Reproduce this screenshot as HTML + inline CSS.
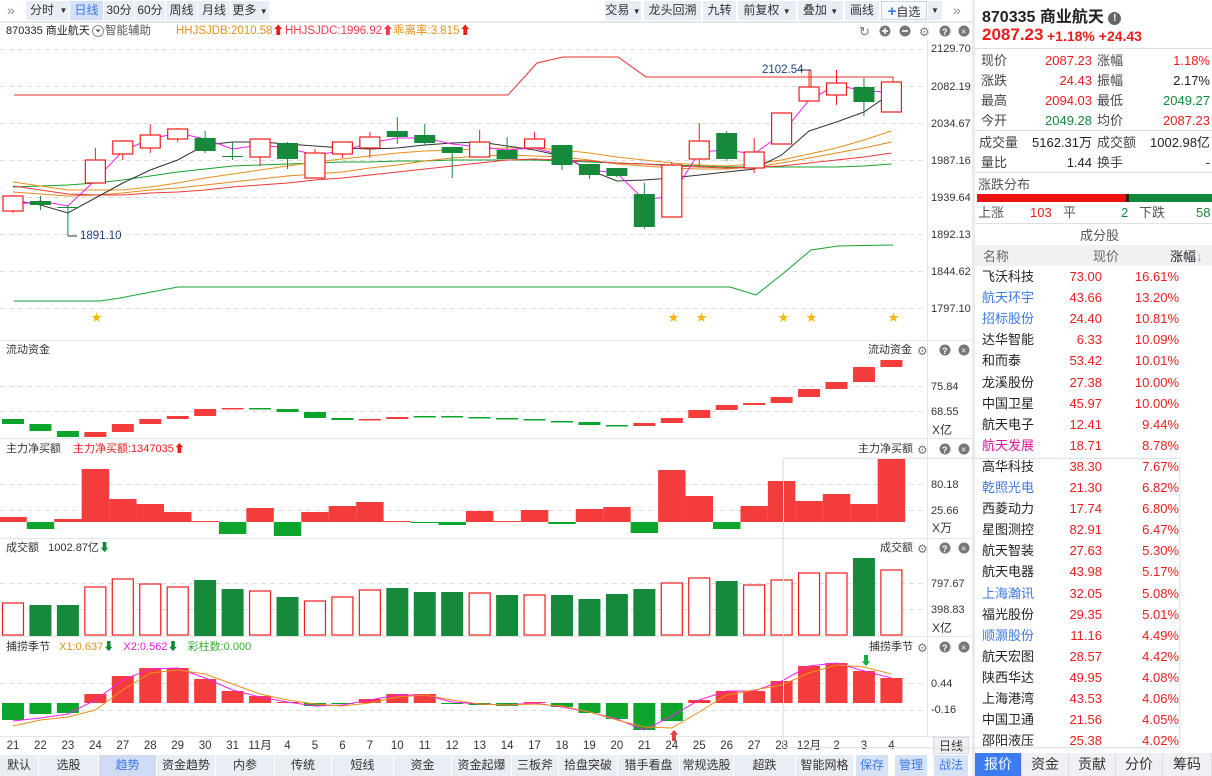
<!DOCTYPE html>
<html><head><meta charset="utf-8">
<style>
*{margin:0;padding:0;box-sizing:border-box}
body{width:1212px;height:776px;overflow:hidden;background:#fff;font-family:"Liberation Sans","Noto Sans CJK SC",sans-serif;font-size:12px;color:#333;position:relative}
.a{position:absolute;white-space:nowrap}
.btn{position:absolute;top:1px;height:19px;background:#e9edf5;line-height:19px;text-align:center;font-size:12px;color:#333}
.lbl{position:absolute;font-size:11px;color:#333;white-space:nowrap;line-height:14px}
.r{color:#ee1c1c}.g{color:#12883a}.b{color:#3c78e6}.o{color:#e8901c}.m{color:#e0149a}
.tab{position:absolute;top:755px;height:21px;line-height:21px;text-align:center;font-size:12px;background:#e9edf4;border-right:1px solid #fff}
.rt{position:absolute;top:753px;height:23px;line-height:23px;text-align:center;font-size:14px;background:#eef0f4;border-right:1px solid #d8dce4}
.row{position:absolute;left:975px;width:237px;height:21px;font-size:13px;line-height:21px}
.row span{position:absolute}
.q{position:absolute;font-size:13px;line-height:17px}
</style></head><body>

<div class="a" style="left:0;top:0;width:975px;height:22px;background:#fff;border-bottom:1px solid #e4e7ee"></div>
<div class="a" style="left:7px;top:2px;font-size:14px;color:#888">»</div>
<div class="btn" style="left:26px;width:32px">分时</div>
<div class="btn" style="left:58px;width:11px;font-size:8px">▼</div>
<div class="btn" style="left:70px;width:33px;background:#d3e0f5;color:#3c78e6">日线</div>
<div class="btn" style="left:104px;width:30px">30分</div>
<div class="btn" style="left:135px;width:30px">60分</div>
<div class="btn" style="left:166px;width:31px">周线</div>
<div class="btn" style="left:198px;width:32px">月线</div>
<div class="btn" style="left:231px;width:38px">更多 <span style="font-size:8px">▼</span></div>
<div class="btn" style="left:605px;width:36px">交易 <span style="font-size:8px">▼</span></div>
<div class="btn" style="left:644px;width:57px">龙头回溯</div>
<div class="btn" style="left:703px;width:33px">九转</div>
<div class="btn" style="left:738px;width:58px">前复权 <span style="font-size:8px">▼</span></div>
<div class="btn" style="left:798px;width:45px">叠加 <span style="font-size:8px">▼</span></div>
<div class="btn" style="left:845px;width:34px">画线</div>
<div class="btn" style="left:881px;width:46px;background:#f4f7fc;border:1px solid #c8d6ee"><span style="color:#3c78e6;font-size:15px;font-weight:bold">+</span>自选</div>
<div class="btn" style="left:928px;width:14px;font-size:8px">▼</div>
<div class="a" style="left:953px;top:2px;font-size:14px;color:#888">»</div>

<div class="lbl" style="left:6px;top:24px;font-size:11px;color:#222">870335 商业航天</div>
<div class="lbl" style="left:105px;top:24px;font-size:11.5px;color:#555">智能辅助</div>
<div class="lbl" style="left:176px;top:24px;font-size:11.5px;color:#e8901c">HHJSJDB:2010.58<span style="color:#ee1c1c">⬆</span></div>
<div class="lbl" style="left:285px;top:24px;font-size:11.5px;color:#f03c4a">HHJSJDC:1996.92⬆</div>
<div class="lbl" style="left:393px;top:24px;font-size:11.5px;color:#e8901c">乖离率:3.815<span style="color:#ee1c1c">⬆</span></div>

<svg id="ch" class="a" style="left:0;top:0" width="975" height="776"></svg>

<div class="lbl" style="left:931px;top:42px">2129.70</div>
<div class="lbl" style="left:931px;top:80px">2082.19</div>
<div class="lbl" style="left:931px;top:117px">2034.67</div>
<div class="lbl" style="left:931px;top:154px">1987.16</div>
<div class="lbl" style="left:931px;top:191px">1939.64</div>
<div class="lbl" style="left:931px;top:228px">1892.13</div>
<div class="lbl" style="left:931px;top:265px">1844.62</div>
<div class="lbl" style="left:931px;top:302px">1797.10</div>
<div class="lbl" style="left:80px;top:229px;color:#1f3f7a;font-size:11.5px">1891.10</div>
<div class="lbl" style="left:762px;top:63px;color:#1f3f7a;font-size:11.5px">2102.54</div>

<div class="lbl" style="left:6px;top:343px">流动资金</div>
<div class="lbl" style="left:868px;top:343px">流动资金</div>
<div class="lbl" style="left:931px;top:380px">75.84</div>
<div class="lbl" style="left:931px;top:405px">68.55</div>
<div class="lbl" style="left:932px;top:423px;font-size:12px">X亿</div>

<div class="lbl" style="left:6px;top:442px">主力净买额</div>
<div class="lbl" style="left:73px;top:442px;color:#ee1c1c">主力净买额:1347035⬆</div>
<div class="lbl" style="left:858px;top:442px">主力净买额</div>
<div class="lbl" style="left:931px;top:478px">80.18</div>
<div class="lbl" style="left:931px;top:504px">25.66</div>
<div class="lbl" style="left:932px;top:521px;font-size:12px">X万</div>

<div class="lbl" style="left:6px;top:541px">成交额 &nbsp; 1002.87亿<span style="color:#12883a">⬇</span></div>
<div class="lbl" style="left:880px;top:541px">成交额</div>
<div class="lbl" style="left:931px;top:577px">797.67</div>
<div class="lbl" style="left:931px;top:603px">398.83</div>
<div class="lbl" style="left:932px;top:621px;font-size:12px">X亿</div>

<div class="lbl" style="left:6px;top:640px">捕捞季节 &nbsp; <span style="color:#e8901c">X1:0.637</span><span style="color:#12883a">⬇</span> &nbsp; <span style="color:#e020e0">X2:0.562</span><span style="color:#12883a">⬇</span> &nbsp; <span style="color:#30b030">彩柱数:0.000</span></div>
<div class="lbl" style="left:869px;top:640px">捕捞季节</div>
<div class="lbl" style="left:931px;top:677px">0.44</div>
<div class="lbl" style="left:931px;top:703px">-0.16</div>

<div id="dates"></div>
<div class="a" style="left:933px;top:737px;width:36px;height:17px;background:#eef0f4;border:1px solid #d8dce4;text-align:center;line-height:16px">日线</div>

<div class="tab" style="left:0;width:39px">默认</div>
<div class="tab" style="left:39px;width:60px">选股</div>
<div class="tab" style="left:99px;width:58px;background:#cfdcf3;color:#3c78e6">趋势</div>
<div class="tab" style="left:157px;width:59px">资金趋势</div>
<div class="tab" style="left:216px;width:59px">内参</div>
<div class="tab" style="left:275px;width:57px">传统</div>
<div class="tab" style="left:332px;width:62px">短线</div>
<div class="tab" style="left:394px;width:58px">资金</div>
<div class="tab" style="left:452px;width:60px">资金起爆</div>
<div class="tab" style="left:512px;width:47px">三板斧</div>
<div class="tab" style="left:559px;width:59px">拾盘突破</div>
<div class="tab" style="left:618px;width:62px">猎手看盘</div>
<div class="tab" style="left:680px;width:54px">常规选股</div>
<div class="tab" style="left:734px;width:62px">超跌</div>
<div class="tab" style="left:796px;width:58px">智能网格</div>
<div class="tab" style="left:856px;width:33px;background:#d6e2f6;color:#3c78e6">保存</div>
<div class="tab" style="left:895px;width:33px;background:#d6e2f6;color:#3c78e6">管理</div>
<div class="tab" style="left:934px;width:35px;background:#d6e2f6;color:#3c78e6">战法</div>

<div class="a" style="left:972px;top:0;width:3px;height:776px;background:#e8ebf0"></div>
<div class="a" style="left:982px;top:3px;font-size:16px;font-weight:bold;color:#222">870335 商业航天 <span style="display:inline-block;width:13px;height:13px;border-radius:50%;background:#666;color:#fff;font-size:10px;text-align:center;line-height:13px;vertical-align:1px">!</span></div>
<div class="a r" style="left:982px;top:25px;font-size:17px;font-weight:bold">2087.23</div>
<div class="a r" style="left:1047px;top:28px;font-size:14px;font-weight:bold">+1.18% +24.43</div>
<div class="a" style="left:975px;top:48px;width:237px;border-top:1px solid #e0e0e0"></div>
<div class="q" style="left:981px;top:52px;color:#444">现价</div><div class="q r" style="left:1000px;width:92px;top:52px;text-align:right">2087.23</div><div class="q" style="left:1097px;top:52px;color:#444">涨幅</div><div class="q r" style="left:1120px;width:90px;top:52px;text-align:right">1.18%</div>
<div class="q" style="left:981px;top:72px;color:#444">涨跌</div><div class="q r" style="left:1000px;width:92px;top:72px;text-align:right">24.43</div><div class="q" style="left:1097px;top:72px;color:#444">振幅</div><div class="q" style="left:1120px;width:90px;top:72px;text-align:right;color:#222">2.17%</div>
<div class="q" style="left:981px;top:92px;color:#444">最高</div><div class="q r" style="left:1000px;width:92px;top:92px;text-align:right">2094.03</div><div class="q" style="left:1097px;top:92px;color:#444">最低</div><div class="q g" style="left:1120px;width:90px;top:92px;text-align:right">2049.27</div>
<div class="q" style="left:981px;top:112px;color:#444">今开</div><div class="q g" style="left:1000px;width:92px;top:112px;text-align:right">2049.28</div><div class="q" style="left:1097px;top:112px;color:#444">均价</div><div class="q r" style="left:1120px;width:90px;top:112px;text-align:right">2087.23</div>
<div class="a" style="left:975px;top:130px;width:237px;border-top:1px solid #e0e0e0"></div>
<div class="q" style="left:979px;top:134px;color:#444">成交量</div><div class="q" style="left:1000px;width:92px;top:134px;text-align:right;color:#222">5162.31万</div><div class="q" style="left:1097px;top:134px;color:#444">成交额</div><div class="q" style="left:1120px;width:90px;top:134px;text-align:right;color:#222">1002.98亿</div>
<div class="q" style="left:981px;top:154px;color:#444">量比</div><div class="q" style="left:1000px;width:92px;top:154px;text-align:right;color:#222">1.44</div><div class="q" style="left:1097px;top:154px;color:#444">换手</div><div class="q" style="left:1120px;width:90px;top:154px;text-align:right;color:#222">-</div>
<div class="a" style="left:975px;top:172px;width:237px;border-top:1px solid #e0e0e0"></div>
<div class="q" style="left:978px;top:176px;color:#555">涨跌分布</div>
<div class="a" style="left:977px;top:194px;width:149px;height:8px;background:#ee1111"></div>
<div class="a" style="left:1126px;top:194px;width:3px;height:8px;background:#222"></div>
<div class="a" style="left:1129px;top:194px;width:83px;height:8px;background:#14883a"></div>
<div class="q" style="left:978px;top:204px;color:#555">上涨</div><div class="q r" style="left:1030px;top:204px">103</div><div class="q" style="left:1063px;top:204px;color:#555">平</div><div class="q g" style="left:1121px;top:204px">2</div><div class="q" style="left:1139px;top:204px;color:#555">下跌</div><div class="q g" style="left:1196px;top:204px">58</div>
<div class="a" style="left:975px;top:223px;width:237px;border-top:1px solid #e0e0e0"></div>
<div class="q" style="left:1080px;top:227px;color:#555">成分股</div>
<div class="a" style="left:975px;top:245px;width:237px;height:21px;background:#f0f1f3"></div>
<div class="q" style="left:983px;top:248px;color:#666">名称</div><div class="q" style="left:1093px;top:248px;color:#666">现价</div><div class="q" style="left:1170px;top:248px;color:#222">涨幅<span style="color:#7aa0e0">↓</span></div>
<div id="list"></div>
<div class="a" style="left:783px;top:458px;width:397px;height:290px;border:1px solid #e4e4e4;box-shadow:0 0 4px rgba(0,0,0,.08)"></div>
<div class="rt" style="left:975px;width:47px;background:#3c7cf0;color:#fff">报价</div>
<div class="rt" style="left:1022px;width:47px">资金</div>
<div class="rt" style="left:1069px;width:47px">贡献</div>
<div class="rt" style="left:1116px;width:47px">分价</div>
<div class="rt" style="left:1163px;width:49px">筹码</div>

<script>
var S=document.getElementById('ch'),h='';
function X(i){return 13+27.45*i}
function L(x1,y1,x2,y2,c,w,d){h+='<line x1="'+x1+'" y1="'+y1+'" x2="'+x2+'" y2="'+y2+'" stroke="'+c+'" stroke-width="'+(w||1)+'"'+(d?' stroke-dasharray="'+d+'"':'')+'/>'}
function R(x,y,w,hh,f,s){h+='<rect x="'+x+'" y="'+y+'" width="'+w+'" height="'+Math.max(hh,1)+'" fill="'+f+'"'+(s?' stroke="'+s+'" stroke-width="1.2"':'')+'/>'}
function P(pts,c,w){h+='<polyline fill="none" stroke="'+c+'" stroke-width="'+(w||1)+'" points="'+pts.map(function(p){return p.join(',')}).join(' ')+'"/>'}
function PY(arr,c,w){P(arr.map(function(y,i){return [X(i),y]}),c,w)}
[22,340,438,538,636,736].forEach(function(y){L(0,y+.5,975,y+.5,'#e2e5ea',1)});
L(927.5,40,927.5,736,'#e2e5ea');
[49,86,123,160,197,234,271,308,386,411,484,510,583,609,683,710].forEach(function(y){L(0,y+.5,925,y+.5,'#dcdcdc',1,'5,4')});
P([[14,95],[508,95],[537,63],[563,57],[618,57],[646,77],[893,77],[893,82]],'#e83030');
P([[14,301],[100,301],[120,298],[178,287],[730,287],[756,295],[785,272],[811,250],[838,246],[893,245]],'#14a030');
PY([187,186,185,183,180,176,172,169,166,165,164,163,162,162,161,161,160,160,160,160,161,162,163,164,165,166,167,167,167,167,167,166,164],'#18a030');
PY([182,186,190,190,190,187,183,178,174,170,166,162,159,156,153,151,150,149,148,148,150,153,157,160,163,165,166,164,160,154,148,140,131],'#e8901c');
PY([192,194,196,195,193,190,188,185,182,179,176,174,172,168,165,161,158,156,155,156,157,160,164,166,168,169,169,167,163,158,153,148,142],'#e08a20');
PY([186,190,194,195,195,193,192,190,187,185,183,180,178,175,172,169,166,163,160,159,160,161,163,164,166,167,168,167,166,163,160,157,153],'#ee3838');
PY([200,205,213,198,183,170,160,145,142,142,144,146,148,149,148,145,143,142,146,150,156,170,181,180,178,175,172,169,155,131,122,112,93],'#333');
PY([205,201,206,180,151,139,133,139,149,145,148,155,151,143,138,138,144,147,150,148,155,170,173,200,196,152,150,154,134,100,85,91,92],'#f020f0');
var C=[[196,211,195,213,1],[201,205,196,210,0],[207,208,205,236,0],[160,183,148,183,1],[141,154,140,160,1],[135,148,124,153,1],[129,139,128,142,1],[138,151,131,153,0],[156,156,142,160,0],[139,157,139,166,1],[143,159,142,169,0],[153,178,149,178,1],[142,154,142,158,1],[137,148,132,158,1],[131,137,117,144,0],[135,143,124,145,0],[147,153,147,178,0],[142,157,130,157,1],[150,159,137,159,0],[139,148,132,148,1],[145,165,145,170,0],[164,175,164,179,0],[168,176,168,177,0],[194,227,183,229,0],[165,217,162,217,1],[141,159,123,165,1],[133,159,131,161,0],[152,168,138,173,1],[113,144,113,144,1],[87,101,70,101,1],[83,95,70,105,1],[87,102,78,116,0],[82,112,82,112,1]];
C.forEach(function(c,i){var x=X(i);var col=c[4]?'#f01c1c':'#168a3a';L(x,c[2],x,c[3],col);if(c[4])R(x-10,c[0],20,c[1]-c[0],'#fff',col);else R(x-10.5,c[0],21,c[1]-c[0],col)});
L(68,236,77,236,'#333');L(811,70,811,87,'#f01c1c');L(800,70,811,70,'#333');
[96,673,701,783,811,893].forEach(function(x){h+='<text x="'+(x-5)+'" y="321" font-size="11" fill="#f5b800">★</text>'});
var F=[[419,424,0],[424,431,0],[431,437,0],[432,437,1],[424,432,1],[419,424,1],[416,419,1],[409,416,1],[408,409,1],[408,409,0],[409,412,0],[412,418,0],[418,420,0],[419,420,1],[417,419,1],[416,417,0],[416,417,0],[417,418,0],[418,419,0],[419,420,0],[421,422,0],[422,425,0],[425,426,0],[423,426,1],[418,423,1],[410,418,1],[405,410,1],[403,405,1],[397,403,1],[389,397,1],[382,389,1],[367,382,1],[360,367,1]];
F.forEach(function(f,i){R(X(i)-11,f[0],22,Math.max(f[1]-f[0],1.5),f[2]?'#f53c3c':'#0aa52a')});
var N=[517,529,519,469,499,504,512,521,534,508,536,512,506,502,521,523,525,511,521,510,524,509,507,533,470,496,529,506,481,501,494,504,459];
var NS=[1,0,1,1,1,1,1,1,0,1,0,1,1,1,1,0,0,1,1,1,0,1,1,0,1,1,0,1,1,1,1,1,1];
N.forEach(function(y,i){var x=X(i)-13.7;if(NS[i])R(x,y,27.45,522-y,'#f53c3c');else R(x,522,27.45,y-522,'#0aa52a')});
var V=[603,605,605,587,579,584,587,580,589,591,597,601,597,590,588,592,592,593,595,595,595,599,594,589,583,578,581,585,580,573,573,558,570];
var VS=[1,0,0,1,1,1,1,0,0,1,0,1,1,1,0,0,0,1,0,1,0,0,0,0,1,1,0,1,1,1,1,0,1];
V.forEach(function(y,i){var x=X(i);if(VS[i])R(x-10.5,y,21,635-y,'#fff','#ee1c1c');else R(x-11,y,22,636-y,'#168a3a')});
var B=[720,714,713,694,676,668,668,679,691,696,702,706,704,699,694,694,704,705,706,702,707,713,719,730,721,700,691,691,681,666,663,671,678];
B.forEach(function(y,i){var x=X(i)-11;if(y<703)R(x,y,22,703-y,'#f53c3c');else R(x,703,22,y-703,'#0aa52a')});
PY([721,718,714,700,680,669,668,678,690,697,702,706,705,700,695,695,702,704,705,703,707,712,719,730,716,700,691,691,681,666,663,671,678],'#f020f0');
PY([726,720,717,710,690,673,670,674,684,694,700,704,706,703,697,695,700,704,705,704,706,712,720,727,728,712,695,690,685,673,665,667,674],'#e8901c');
h+='<text x="668" y="740" font-size="12" fill="#f04040">⬆</text><text x="860" y="665" font-size="12" fill="#10b040">⬇</text>';
function icons(y){
 h+='<text x="917" y="'+(y+5)+'" font-size="12" fill="#777">⚙</text><circle cx="945" cy="'+y+'" r="5.5" fill="#777"/><circle cx="964" cy="'+y+'" r="5.5" fill="#777"/><text x="942" y="'+(y+4)+'" font-size="9" fill="#fff" font-weight="bold">?</text><text x="961" y="'+(y+3.5)+'" font-size="9" fill="#fff">×</text>';
}
[350,449,548,647].forEach(function(y){icons(y)});
var ty=31;
h+='<text x="859" y="'+(ty+5)+'" font-size="13" fill="#777">↻</text>';
h+='<circle cx="885" cy="'+ty+'" r="5.5" fill="#777"/><rect x="882" y="'+(ty-.8)+'" width="6" height="1.6" fill="#fff"/><rect x="884.2" y="'+(ty-3)+'" width="1.6" height="6" fill="#fff"/>';
h+='<circle cx="905" cy="'+ty+'" r="5.5" fill="#777"/><rect x="902" y="'+(ty-.8)+'" width="6" height="1.6" fill="#fff"/>';
h+='<text x="919" y="'+(ty+5)+'" font-size="12" fill="#777">⚙</text>';
h+='<circle cx="945" cy="'+ty+'" r="5.5" fill="#777"/><text x="942" y="'+(ty+4)+'" font-size="9" fill="#fff" font-weight="bold">?</text>';
h+='<circle cx="964" cy="'+ty+'" r="5.5" fill="#777"/><text x="961" y="'+(ty+3.5)+'" font-size="9" fill="#fff">×</text>';
h+='<circle cx="98" cy="31" r="5.5" fill="#fff" stroke="#889"/><path d="M95.5 29.5 L100.5 29.5 L98 32.5 Z" fill="#556"/>';
S.innerHTML=h;
var D=['21','22','23','24','27','28','29','30','31','11月','4','5','6','7','10','11','12','13','14','17','18','19','20','21','24','25','26','27','28','12月','2','3','4'],dh='';
D.forEach(function(d,i){dh+='<div class="lbl" style="left:'+(X(i)-20)+'px;width:40px;text-align:center;top:739px;font-size:11.5px;color:#333">'+d+'</div>'});
document.getElementById('dates').innerHTML=dh;
var Ls=[['飞沃科技','73.00','16.61%',''],['航天环宇','43.66','13.20%','b'],['招标股份','24.40','10.81%','b'],['达华智能','6.33','10.09%',''],['和而泰','53.42','10.01%',''],['龙溪股份','27.38','10.00%',''],['中国卫星','45.97','10.00%',''],['航天电子','12.41','9.44%',''],['航天发展','18.71','8.78%','m'],['高华科技','38.30','7.67%',''],['乾照光电','21.30','6.82%','b'],['西菱动力','17.74','6.80%',''],['星图测控','82.91','6.47%',''],['航天智装','27.63','5.30%',''],['航天电器','43.98','5.17%',''],['上海瀚讯','32.05','5.08%','b'],['福光股份','29.35','5.01%',''],['顺灏股份','11.16','4.49%','b'],['航天宏图','28.57','4.42%',''],['陕西华达','49.95','4.08%',''],['上海港湾','43.53','4.06%',''],['中国卫通','21.56','4.05%',''],['邵阳液压','25.38','4.02%','']],lh='';
Ls.forEach(function(r,i){lh+='<div class="row" style="top:'+(266+i*21.1)+'px"><span class="'+r[3]+'" style="left:7px;'+(r[3]?'':'color:#222')+'">'+r[0]+'</span><span class="r" style="left:60px;width:67px;text-align:right">'+r[1]+'</span><span class="r" style="left:130px;width:74px;text-align:right">'+r[2]+'</span></div>'});
document.getElementById('list').innerHTML=lh;
</script>
</body></html>
